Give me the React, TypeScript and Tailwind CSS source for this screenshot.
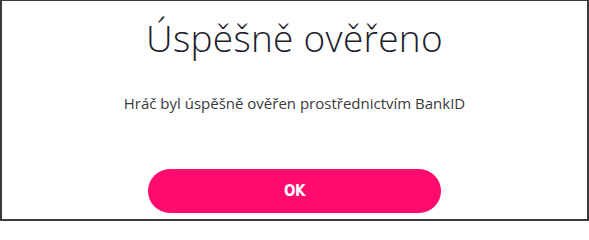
export default function App() {
  return (
    <div className="h-[221px] w-[589px] overflow-hidden border-t border-l-2 border-r-2 border-b-2 border-[#3a3a3a] bg-white">
      <div className="flex flex-col items-center">
        {/* Title */}
        <h1 className="mt-[13px] text-[37px] font-light leading-[48px] tracking-[0.3px] text-[#1c1c2b] [font-family:'Open_Sans',sans-serif]">
          Úspěšně ověřeno
        </h1>
        {/* Message */}
        <p className="mt-[31px] text-[15px] leading-[20px] text-[#3a3a3a] [font-family:'Open_Sans',sans-serif]">
          Hráč byl úspěšně ověřen prostřednictvím BankID
        </p>
        <button className="mt-[56px] flex h-[44px] w-[293px] items-center justify-center rounded-full bg-[#ff0b6d] text-[15px] font-bold tracking-[-0.5px] text-white [font-family:'DejaVu_Sans_Condensed',sans-serif]">
          OK
        </button>
      </div>
    </div>
  )
}
